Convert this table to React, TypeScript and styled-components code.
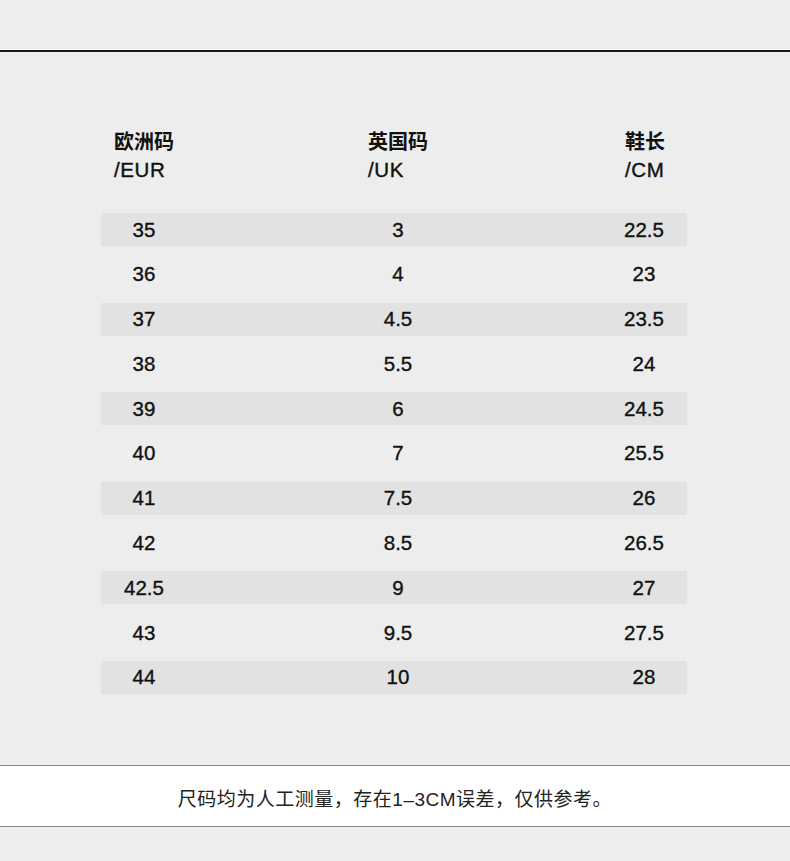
import { createGlobalStyle } from 'styled-components';
import styled from 'styled-components';

const GlobalStyle = createGlobalStyle`
  html, body {
    margin: 0;
    padding: 0;
    background: #ededed;
  }
  body {
    font-family: 'Liberation Sans', 'Noto Sans CJK SC', sans-serif;
    color: #111;
  }
`;

const StyledPage = styled.div`
  width: 790px;
  height: 861px;
  background: #ededed;
  display: flex;
  flex-direction: column;
  overflow: hidden;
`;

const StyledTopRule = styled.div`
  margin-top: 49px;
  height: 2px;
  border-top: 1px solid #fafafa;
  background: #1a1a1a;
`;

const StyledChart = styled.div`
  padding: 74px 0 0 101px;
  width: 586px;
`;

const StyledGrid = styled.div<{ header?: boolean }>`
  display: grid;
  grid-template-columns: 86px 422px 78px;
  ${(props) => (props.header ? 'margin-bottom: 29px;' : '')}
`;

const StyledHeadCell = styled.div<{ last?: boolean }>`
  justify-self: center;
  text-align: left;
  font-size: 20.5px;
  line-height: 29px;
  margin-right: ${(props) => (props.last ? '6px' : '0')};
  span {
    display: block;
    letter-spacing: 0.6px;
    -webkit-text-stroke: 0.4px #111;
  }
  span:first-child {
    font-weight: 700;
    font-family: 'Noto Sans CJK SC', sans-serif;
    font-size: 20px;
    letter-spacing: 0;
    -webkit-text-stroke: 0;
  }
`;

const StyledRows = styled.div`
  display: flex;
  flex-direction: column;
  gap: 11.8px;
`;

const StyledRow = styled(StyledGrid)<{ shaded: boolean }>`
  height: 33px;
  align-items: center;
  background: ${(props) => (props.shaded ? '#e2e2e2' : 'transparent')};
`;

const StyledCell = styled.div<{ last?: boolean }>`
  text-align: center;
  font-size: 20.5px;
  padding-right: ${(props) => (props.last ? '8px' : '0')};
  -webkit-text-stroke: 0.35px #111;
`;

const StyledFooter = styled.div`
  margin-top: auto;
  margin-bottom: 34px;
  height: 58px;
  background: #fff;
  border-top: 1px solid #8a8a8a;
  border-bottom: 1px solid #8a8a8a;
  display: flex;
  align-items: center;
  justify-content: center;
  font-size: 19px;
  letter-spacing: 0.5px;
  color: #222;
  padding-top: 2px;
  box-sizing: content-box;
`;

const sizes: [string, string, string][] = [
  ['35', '3', '22.5'],
  ['36', '4', '23'],
  ['37', '4.5', '23.5'],
  ['38', '5.5', '24'],
  ['39', '6', '24.5'],
  ['40', '7', '25.5'],
  ['41', '7.5', '26'],
  ['42', '8.5', '26.5'],
  ['42.5', '9', '27'],
  ['43', '9.5', '27.5'],
  ['44', '10', '28'],
];

const App = () => {
  return (
    <StyledPage>
      <GlobalStyle />
      <StyledTopRule />
      <StyledChart>
        <StyledGrid header>
          <StyledHeadCell>
            <span>欧洲码</span>
            <span>/EUR</span>
          </StyledHeadCell>
          <StyledHeadCell>
            <span>英国码</span>
            <span>/UK</span>
          </StyledHeadCell>
          <StyledHeadCell last>
            <span>鞋长</span>
            <span>/CM</span>
          </StyledHeadCell>
        </StyledGrid>
        <StyledRows>
          {sizes.map(([eur, uk, cm], i) => (
            <StyledRow key={eur} shaded={i % 2 === 0}>
              <StyledCell>{eur}</StyledCell>
              <StyledCell>{uk}</StyledCell>
              <StyledCell last>{cm}</StyledCell>
            </StyledRow>
          ))}
        </StyledRows>
      </StyledChart>
      <StyledFooter>尺码均为人工测量，存在1–3CM误差，仅供参考。</StyledFooter>
    </StyledPage>
  );
};

export default App;
